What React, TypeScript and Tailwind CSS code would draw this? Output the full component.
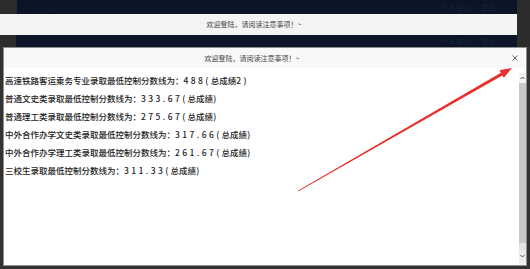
import React from 'react';

const lines: [string, string, string, string][] = [
  ['高速铁路客运乘务专业录取最低控制分数线为：', '488(', '总成绩', '2)'],
  ['普通文史类录取最低控制分数线为：', '333.67(', '总成绩', ')'],
  ['普通理工类录取最低控制分数线为：', '275.67(', '总成绩', ')'],
  ['中外合作办学文史类录取最低控制分数线为：', '317.66(', '总成绩', ')'],
  ['中外合作办学理工类录取最低控制分数线为：', '261.67(', '总成绩', ')'],
  ['三校生录取最低控制分数线为：', '311.33(', '总成绩', ')'],
];

const title = '欢迎登陆，请阅读注意事项！~';

const App: React.FC = () => {
  return (
    <div className="relative w-[530px] h-[269px] overflow-hidden bg-[#333333] font-['Noto_Sans_CJK_SC','Noto_Sans',sans-serif]">
      {/* page behind the layer */}
      <div className="flex h-[14px]">
        <div className="w-[17px] bg-[#2c2c2c]" />
        <div className="flex-1 bg-[#0c1528] flex items-center">
          <span className="ml-[33px] text-[7px] text-[#172033]">◎</span>
          <span className="ml-auto mr-[20px] text-[7px] tracking-[1px] text-[#19233a]">个人中心　退出</span>
        </div>
        <div className="w-[13px] bg-[#2c2c2c]" />
      </div>

      <div className="flex h-[21px]">
        <div className="w-[517px] bg-[#f4f4f4] flex items-center justify-center pr-[9px]">
          <span className="text-[7px] leading-none text-[#444]">{title}</span>
        </div>
        <div className="flex-1 bg-[#2c2c2c]" />
      </div>

      <div className="flex h-[12px]">
        <div className="w-[16px] bg-[#2c2c2c]" />
        <div className="flex-1 bg-[#0c1528] flex items-center">
          <span className="ml-auto mr-[20px] text-[7px] tracking-[1px] text-[#19233a]">个人中心　退出</span>
        </div>
        <div className="w-[13px] bg-[#2c2c2c]" />
      </div>

      {/* layer dialog */}
      <div className="ml-[3px] w-[524px] h-[219px] border border-[#8e8e8e] bg-white flex flex-col">
        <div className="relative h-[20px] bg-[#f8f8f8] flex items-center justify-center pr-[26px]">
          <span className="text-[7px] leading-none text-[#444]">{title}</span>
          <svg className="absolute right-[8px] top-[7px]" width="6" height="6" viewBox="0 0 6 6">
            <path d="M0.5 0.5 L5.5 5.5 M5.5 0.5 L0.5 5.5" stroke="#555" strokeWidth="0.9" />
          </svg>
        </div>

        <div className="flex flex-1 min-h-0">
          <div className="flex-1 pt-[3px] pl-[1px] text-[8.5px] leading-[18px] font-medium text-[#1c1c1c]">
            {lines.map(([a, b, c, d], i) => (
              <p key={i} className="whitespace-nowrap">
                {a}
                <span className="tracking-[2.4px]">{b}</span>
                {c}
                <span className="tracking-[2.4px]">{d}</span>
              </p>
            ))}
          </div>

          {/* scrollbar */}
          <div className="w-[7px] flex flex-col bg-[#f2f2f2]">
            <div className="h-[5px] bg-white" />
            <div className="h-[10px] flex items-center justify-center">
              <svg width="5" height="4" viewBox="0 0 5 4">
                <path d="M0.5 3 L2.5 1 L4.5 3" stroke="#555" strokeWidth="1" fill="none" />
              </svg>
            </div>
            <div className="h-[160px] bg-[#c9c9c9]" />
            <div className="flex-1 bg-[#e4e4e4]" />
            <div className="h-[12px] flex items-center justify-center bg-[#ececec]">
              <svg width="5" height="4" viewBox="0 0 5 4">
                <path d="M0.5 1 L2.5 3 L4.5 1" stroke="#555" strokeWidth="1" fill="none" />
              </svg>
            </div>
            <div className="h-[3px]" />
          </div>
        </div>
      </div>

      {/* red annotation arrow */}
      <svg className="absolute inset-0 pointer-events-none" width="530" height="269" viewBox="0 0 530 269">
        <polygon
          points="298.2,191.4 502.3,75.4 503.8,77.8 512,68 499.4,70.3 500.9,72.8 297.8,190.7"
          fill="#e8302e"
        />
      </svg>
    </div>
  );
};

export default App;
